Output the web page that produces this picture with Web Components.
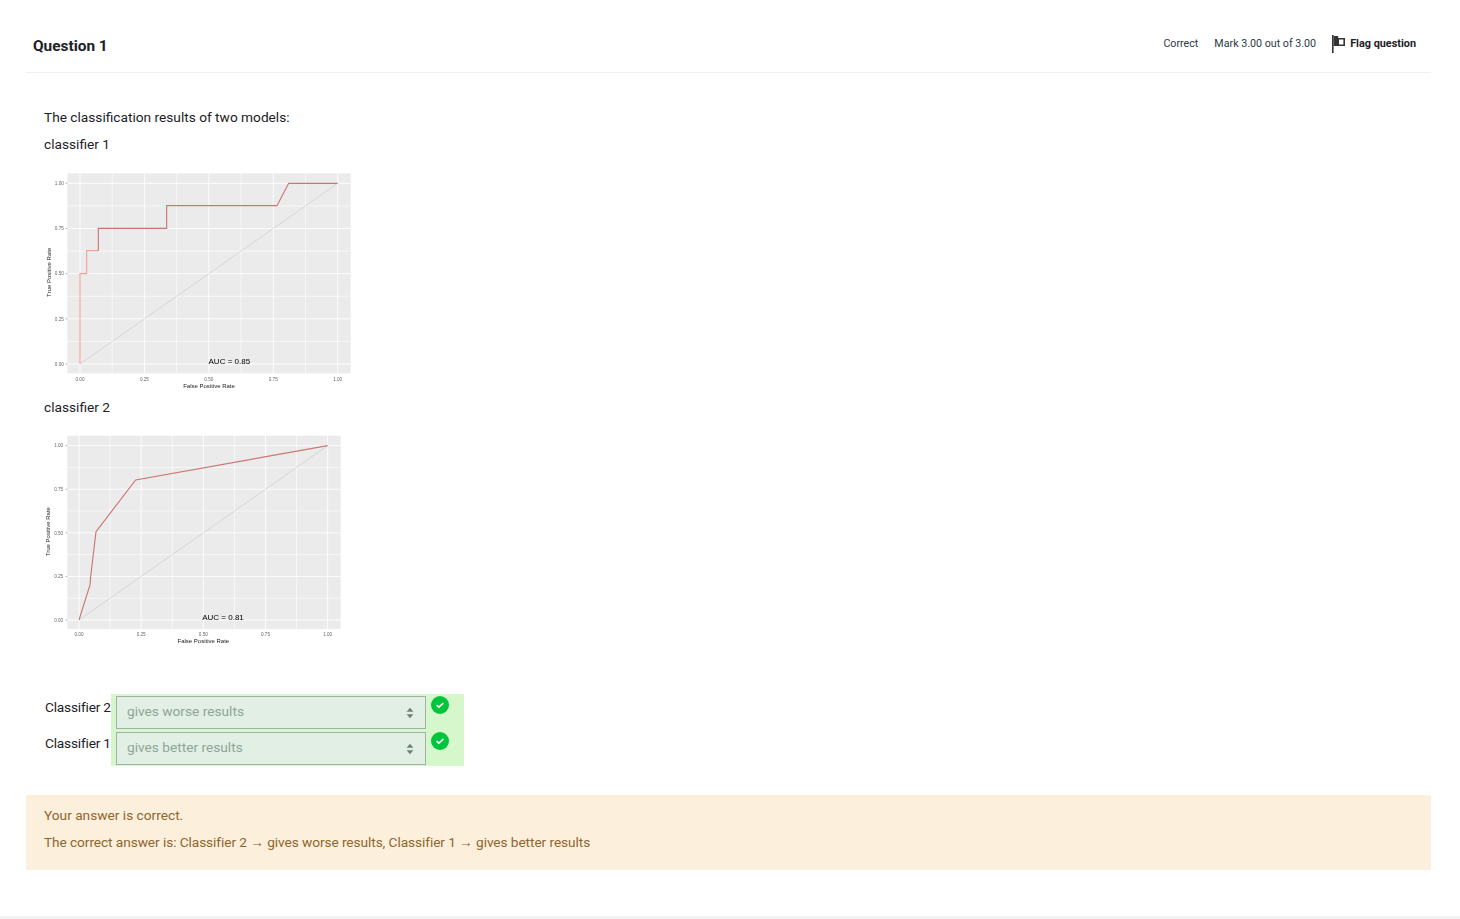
<!DOCTYPE html>
<html lang="en">
<head>
<meta charset="utf-8">
<title>Question 1</title>
<style>
    html, body { margin: 0; background: #fff; }
    body { font-family: Roboto, "Noto Sans", sans-serif; font-size: 13.7px; color: #1d2125; }
</style>
</head>
<body>
<quiz-question>
    <question-header slot="header" state="Correct" mark="Mark 3.00 out of 3.00">Question 1</question-header>

    <question-text>The classification results of two models:</question-text>
    <question-text>classifier 1</question-text>
    <roc-plot style="margin-top:10px"
        box="12 0 948 690" panel="82 25 932 625"
        xs="120 893" ys="597 55"
        pale="120,597 120,326 140,326 140,257 175,257"
        curve="175,257 175,190 380,190 380,122 711,122 746,55 893,55"
        auc="AUC = 0.85" auc-at="568 596" x-title-at="507 670" x-ticks-y="647" y-ticks-x="58" y-title-at="32 322"></roc-plot>
    <question-text style="margin-top:2px">classifier 2</question-text>
    <roc-plot style="margin-top:12px"
        box="12 0 918 660" panel="82 17 902 597"
        xs="117 863" ys="570 47"
        curve="117,570 150,465 152,440 168,305 287,150 863,47"
        auc="AUC = 0.81" auc-at="549 571" x-title-at="490 640" x-ticks-y="617" y-ticks-x="56" y-title-at="30 305"></roc-plot>

    <match-row style="margin-top:44px" label="Classifier 2" value="gives worse results"></match-row>
    <match-row label="Classifier 1" value="gives better results"></match-row>

    <answer-feedback>
        <div>Your answer is correct.</div>
        <div class="tight">The correct answer is: Classifier 2 → gives worse results, Classifier 1 → gives better results</div>
    </answer-feedback>
</quiz-question>
<page-rule></page-rule>

<script>
let questionTmpl = document.createElement('template');
questionTmpl.innerHTML = `
<style>
    :host { display: block; margin: 0 29px 0 26px; }
    .body { padding: 0 0 0 18px; }
</style>
<slot name="header"></slot>
<div class="body"><slot></slot></div>`;

class QuizQuestion extends HTMLElement {
    constructor() {
        super();
        this.attachShadow({mode: 'open'}).appendChild(questionTmpl.content.cloneNode(true));
    }
}

let headerTmpl = document.createElement('template');
headerTmpl.innerHTML = `
<style>
    :host {
        display: flex;
        align-items: center;
        justify-content: space-between;
        height: 45px;
        padding: 27px 15px 0 7px;
        margin-bottom: 34px;
        border-bottom: 1px solid #f0f0f0;
    }
    .title { font-size: 15.4px; font-weight: 700; color: #1d2125; margin-top: -8px; }
    .meta {
        display: flex;
        align-items: center;
        gap: 16px;
        font-size: 10.7px;
        color: #2b3a47;
        margin-top: -13px;
    }
    .flag { display: flex; align-items: center; gap: 4px; font-size: 10.85px; font-weight: 700; color: #1d2125; margin-left: -1px; }
    svg { display: block; width: 15px; height: 18px; margin-top: 2px; }
</style>
<div class="title"><slot></slot></div>
<div class="meta">
    <span class="state"></span>
    <span class="mark"></span>
    <span class="flag">
        <svg viewBox="0 0 15 18" aria-hidden="true">
            <path d="M1 0h1.6v18H1z" fill="#333"/>
            <path d="M2.6 1h4.6v10H2.6z" fill="#333"/>
            <path d="M7.2 3.8h6v6.4h-6z" fill="#fff" stroke="#333" stroke-width="1.6"/>
        </svg>
        Flag question
    </span>
</div>`;

class QuestionHeader extends HTMLElement {
    constructor() {
        super();
        this.attachShadow({mode: 'open'}).appendChild(headerTmpl.content.cloneNode(true));
    }
    connectedCallback() {
        this.shadowRoot.querySelector('.state').textContent = this.getAttribute('state');
        this.shadowRoot.querySelector('.mark').textContent = this.getAttribute('mark');
    }
}

let textTmpl = document.createElement('template');
textTmpl.innerHTML = `
<style>
    :host { display: block; line-height: 21px; margin-bottom: 6px; }
</style>
<slot></slot>`;

class QuestionText extends HTMLElement {
    constructor() {
        super();
        this.attachShadow({mode: 'open'}).appendChild(textTmpl.content.cloneNode(true));
    }
}

// draws the ggplot style roc chart, all numbers are in 3x pixels of the picture
class RocPlot extends HTMLElement {
    constructor() {
        super();
        this.attachShadow({mode: 'open'});
    }
    nums(name) {
        return this.getAttribute(name).split(' ').map(Number);
    }
    connectedCallback() {
        const box = this.nums('box');
        const [px0, py0, px1, py1] = this.nums('panel');
        const [x0, x1] = this.nums('xs');
        const [y0, y1] = this.nums('ys');
        const [ax, ay] = this.nums('auc-at');
        const [tx, ty] = this.nums('x-title-at');
        const [lx, ly] = this.nums('y-title-at');
        const tickY = this.nums('x-ticks-y')[0];
        const tickX = this.nums('y-ticks-x')[0];
        const labels = ['0.00', '0.25', '0.50', '0.75', '1.00'];
        let grid = '', text = '';
        for (let i = 0; i <= 8; i++) {
            const major = i % 2 == 0;
            const gx = x0 + (x1 - x0) * i / 8;
            const gy = y0 + (y1 - y0) * i / 8;
            const w = major ? 2.6 : 1.8;
            grid += `<line x1="${gx}" x2="${gx}" y1="${py0}" y2="${py1}" stroke="#fff" stroke-width="${w}"/>`;
            grid += `<line x1="${px0}" x2="${px1}" y1="${gy}" y2="${gy}" stroke="#fff" stroke-width="${w}"/>`;
            if (major) {
                const l = labels[i / 2];
                text += `<text x="${gx}" y="${tickY}" text-anchor="middle" class="tick">${l}</text>`;
                text += `<text x="${tickX}" y="${gy + 5}" text-anchor="middle" class="tick">${l}</text>`;
                text += `<line x1="${px0 - 5}" x2="${px0}" y1="${gy}" y2="${gy}" stroke="#666" stroke-width="1.5"/>`;
            }
        }
        const pale = this.getAttribute('pale');
        this.shadowRoot.innerHTML = `
<style>
    :host { display: block; width: ${box[2] / 3}px; height: ${box[3] / 3}px; }
    svg { display: block; width: 100%; height: 100%; filter: blur(0.55px); }
    text { font-family: "Liberation Sans", Arial, sans-serif; }
    .tick { font-size: 14px; fill: #666; }
    .title { font-size: 18px; fill: #222; }
    .auc { font-size: 24px; fill: #000; }
</style>
<svg viewBox="${box.join(' ')}" role="img">
    <rect x="${px0}" y="${py0}" width="${px1 - px0}" height="${py1 - py0}" fill="#ebebeb"/>
    ${grid}
    <line x1="${x0}" y1="${y0}" x2="${x1}" y2="${y1}" stroke="#bcbcbc" stroke-width="1.3"/>
    ${pale ? `<polyline points="${pale}" fill="none" stroke="#f2a09c" stroke-width="3.4"/>` : ''}
    <polyline points="${this.getAttribute('curve')}" fill="none" stroke="#cc7672" stroke-width="3.4"/>
    ${text}
    <text x="${ax}" y="${ay}" text-anchor="middle" class="auc">${this.getAttribute('auc')}</text>
    <text x="${tx}" y="${ty}" text-anchor="middle" class="title">False Positive Rate</text>
    <text transform="translate(${lx} ${ly}) rotate(-90)" text-anchor="middle" class="title">True Positive Rate</text>
</svg>`;
    }
}

let rowTmpl = document.createElement('template');
rowTmpl.innerHTML = `
<style>
    :host { display: flex; height: 36px; }
    .label { width: 66px; padding-left: 1px; line-height: 26px; white-space: nowrap; letter-spacing: -0.2px; }
    .cell {
        display: flex;
        align-items: flex-start;
        gap: 5px;
        box-sizing: border-box;
        width: 353px;
        padding: 2px 5px 1px;
        background: #d5f7cb;
    }
    .select {
        display: flex;
        align-items: center;
        justify-content: space-between;
        box-sizing: border-box;
        width: 310px;
        height: 33px;
        padding: 0 10px 3px;
        background: #e2efe5;
        border: 1px solid #a0b2a6;
        color: #8fa597;
    }
    .arrows { width: 8px; height: 12px; display: block; margin: 3px 1px 0 0; }
    .check { width: 18px; height: 18px; display: block; }
</style>
<div class="label"></div>
<div class="cell">
    <div class="select">
        <span class="value"></span>
        <svg class="arrows" viewBox="0 0 8 12" aria-hidden="true">
            <path d="M4 .8 7.4 4.8H.6zM4 11.2.6 7.2h6.8z" fill="#6f8277"/>
        </svg>
    </div>
    <svg class="check" viewBox="0 0 18 18" aria-hidden="true">
        <circle cx="9" cy="9" r="9" fill="#00c43c"/>
        <path d="M5.6 9.2 7.9 11.2 12.4 7" fill="none" stroke="#fff" stroke-width="1.7"/>
    </svg>
</div>`;

class MatchRow extends HTMLElement {
    constructor() {
        super();
        this.attachShadow({mode: 'open'}).appendChild(rowTmpl.content.cloneNode(true));
    }
    connectedCallback() {
        this.shadowRoot.querySelector('.label').textContent = this.getAttribute('label');
        this.shadowRoot.querySelector('.value').textContent = this.getAttribute('value');
    }
}

let feedbackTmpl = document.createElement('template');
feedbackTmpl.innerHTML = `
<style>
    :host {
        display: block;
        margin: 29px 0 0 -18px;
        padding: 10px 18px 17px;
        background: #fcefdc;
        color: #8e662e;
        line-height: 21px;
    }
    ::slotted(div) { margin-bottom: 6px; }
    ::slotted(div:last-child) { margin-bottom: 0; }
    ::slotted(.tight) { letter-spacing: -0.08px; }
</style>
<slot></slot>`;

class AnswerFeedback extends HTMLElement {
    constructor() {
        super();
        this.attachShadow({mode: 'open'}).appendChild(feedbackTmpl.content.cloneNode(true));
    }
}

let ruleTmpl = document.createElement('template');
ruleTmpl.innerHTML = `
<style>
    :host { display: block; height: 3px; margin-top: 46px; background: #f2f2f2; }
</style>`;

class PageRule extends HTMLElement {
    constructor() {
        super();
        this.attachShadow({mode: 'open'}).appendChild(ruleTmpl.content.cloneNode(true));
    }
}

customElements.define('quiz-question', QuizQuestion);
customElements.define('question-header', QuestionHeader);
customElements.define('question-text', QuestionText);
customElements.define('roc-plot', RocPlot);
customElements.define('match-row', MatchRow);
customElements.define('answer-feedback', AnswerFeedback);
customElements.define('page-rule', PageRule);
</script>
</body>
</html>
